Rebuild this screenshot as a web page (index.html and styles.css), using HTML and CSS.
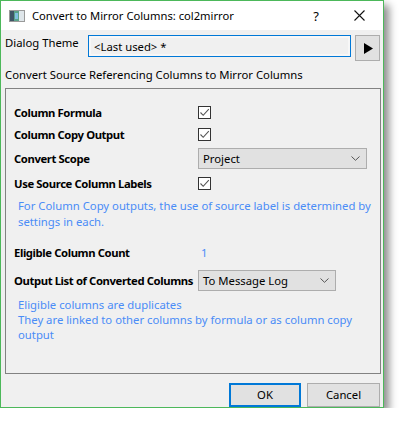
FILE: index.html
```html
<!DOCTYPE html>
<html>
<head>
<meta charset="utf-8">
<link rel="stylesheet" href="styles.css">
</head>
<body>
<div class="window">
  <div class="titlebar">
    <svg class="appicon" width="16" height="12" viewBox="0 0 16 12">
      <rect x="0.5" y="0.5" width="15" height="11" fill="#fff" stroke="#9a9a9a"/>
      <rect x="1" y="1" width="4" height="10" fill="#3e5566"/>
      <rect x="5" y="1" width="5" height="10" fill="#5aa28a"/>
      <rect x="10" y="1" width="5" height="10" fill="#dfe6ea"/>
      <rect x="6" y="3" width="3" height="6" fill="#7fc0e0"/>
    </svg>
    <span class="title">Convert to Mirror Columns: col2mirror</span>
    <span class="help">?</span>
    <svg class="close" width="11" height="11" viewBox="0 0 11 11">
      <path d="M0.5 0.5 L10.5 10.5 M10.5 0.5 L0.5 10.5" stroke="#111" stroke-width="1.1" fill="none"/>
    </svg>
  </div>
  <div class="content">
    <div class="theme-row">
      <span class="theme-label">Dialog Theme</span>
      <div class="theme-input">&lt;Last used&gt; *</div>
      <div class="arrow-btn">
        <svg width="10" height="11" viewBox="0 0 10 11"><path d="M1 0 L10 5.5 L1 11 Z" fill="#000"/></svg>
      </div>
    </div>
    <div class="heading">Convert Source Referencing Columns to Mirror Columns</div>
    <div class="group">
      <div class="row r1">
        <span class="label">Column Formula</span>
        <span class="check"><svg width="11" height="11" viewBox="0 0 11 11"><path d="M1.5 5.5 L4.2 8.3 L9.8 2.2" stroke="#555" stroke-width="1.1" fill="none"/></svg></span>
      </div>
      <div class="row r2">
        <span class="label">Column Copy Output</span>
        <span class="check"><svg width="11" height="11" viewBox="0 0 11 11"><path d="M1.5 5.5 L4.2 8.3 L9.8 2.2" stroke="#555" stroke-width="1.1" fill="none"/></svg></span>
      </div>
      <div class="row r3">
        <span class="label">Convert Scope</span>
        <div class="combo wide">
          <span>Project</span>
          <svg class="chev" width="9" height="5" viewBox="0 0 9 5"><path d="M0.5 0.5 L4.5 4.3 L8.5 0.5" stroke="#555" stroke-width="1" fill="none"/></svg>
        </div>
      </div>
      <div class="row r4">
        <span class="label">Use Source Column Labels</span>
        <span class="check"><svg width="11" height="11" viewBox="0 0 11 11"><path d="M1.5 5.5 L4.2 8.3 L9.8 2.2" stroke="#555" stroke-width="1.1" fill="none"/></svg></span>
      </div>
      <p class="note n1">For Column Copy outputs, the use of source label is determined by settings in each.</p>
      <div class="row r5">
        <span class="label">Eligible Column Count</span>
        <span class="count">1</span>
      </div>
      <div class="row r6">
        <span class="label">Output List of Converted Columns</span>
        <div class="combo narrow">
          <span>To Message Log</span>
          <svg class="chev" width="9" height="5" viewBox="0 0 9 5"><path d="M0.5 0.5 L4.5 4.3 L8.5 0.5" stroke="#555" stroke-width="1" fill="none"/></svg>
        </div>
      </div>
      <p class="note n2">Eligible columns are duplicates<br>They are linked to other columns by formula or as column copy output</p>
    </div>
    <div class="buttons">
      <div class="btn ok">OK</div>
      <div class="btn">Cancel</div>
    </div>
  </div>
</div>
</body>
</html>
```

FILE: styles.css
```css
html, body {
  margin: 0;
  padding: 0;
  background: #ffffff;
}
body {
  font-family: "Noto Sans", "Open Sans", sans-serif;
  font-size: 11.3px;
  color: #000;
}
.window {
  width: 384px;
  height: 408px;
  box-sizing: border-box;
  border: 1px solid #4cb85a;
  background: #f0f0f0;
  box-shadow: 5px 5px 8px rgba(0, 0, 0, 0.45);
  display: flex;
  flex-direction: column;
}
.titlebar {
  height: 29px;
  background: #ffffff;
  display: flex;
  align-items: center;
  flex: none;
}
.appicon {
  margin-left: 8px;
  margin-right: 7px;
}
.title {
  flex: 1;
  font-size: 11.2px;
  line-height: 16px;
}
.help {
  font-size: 13px;
  margin-right: 35px;
}
.close {
  margin-right: 18px;
}
.content {
  flex: 1;
  display: flex;
  flex-direction: column;
  padding: 5px 3px 0 4px;
}
.theme-row {
  display: flex;
  align-items: flex-start;
  height: 26px;
}
.theme-label {
  width: 83px;
  line-height: 16px;
}
.theme-input {
  width: 263px;
  height: 22px;
  box-sizing: border-box;
  border: 1px solid #0078d7;
  background: #f0f0f0;
  box-shadow: inset 0 0 0 2px #f7f7f7;
  padding: 2px 5px 0;
  line-height: 17px;
}
.arrow-btn {
  width: 25px;
  height: 26px;
  box-sizing: border-box;
  margin-left: 4px;
  border: 1px solid #adadad;
  background: #e1e1e1;
  display: flex;
  align-items: center;
  justify-content: center;
}
.heading {
  margin-top: 6px;
  line-height: 16px;
  height: 21px;
}
.group {
  width: 376px;
  height: 286px;
  box-sizing: border-box;
  border: 1px solid #828282;
  padding: 12px 0 0 8px;
}
.row {
  display: flex;
  align-items: center;
}
.label {
  width: 184px;
  font-weight: bold;
  letter-spacing: -0.4px;
  white-space: nowrap;
  flex: none;
}
.r1 { height: 22px; }
.r2 { height: 23px; }
.r3 { height: 25px; }
.r4 { height: 24px; }
.r5 { height: 22px; margin-top: 11px; }
.r6 { height: 24px; margin-top: 5px; }
.check {
  width: 13px;
  height: 13px;
  box-sizing: border-box;
  border: 1px solid #333;
  background: #fff;
  display: flex;
  align-items: center;
  justify-content: center;
}
.combo {
  height: 21px;
  box-sizing: border-box;
  border: 1px solid #adadad;
  background: #e1e1e1;
  display: flex;
  align-items: center;
  justify-content: space-between;
  padding: 0 6px 0 4px;
}
.combo.wide { width: 169px; }
.combo.narrow { width: 138px; }
.count {
  color: #4a8cf7;
  margin-left: 3px;
}
.note {
  margin: 0;
  color: #4a8cf7;
  padding-left: 4px;
  width: 356px;
}
.n1 {
  margin-top: 3px;
  line-height: 16px;
}
.n2 {
  margin-top: 5px;
  line-height: 15px;
}
.buttons {
  display: flex;
  justify-content: flex-end;
  gap: 6px;
  margin-top: 9px;
  padding-right: 0;
}
.btn {
  width: 73px;
  height: 24px;
  box-sizing: border-box;
  border: 1px solid #adadad;
  background: #e1e1e1;
  text-align: center;
  line-height: 21px;
}
.btn.ok {
  border: 2px solid #0078d7;
  line-height: 19px;
  width: 72px;
}
```
